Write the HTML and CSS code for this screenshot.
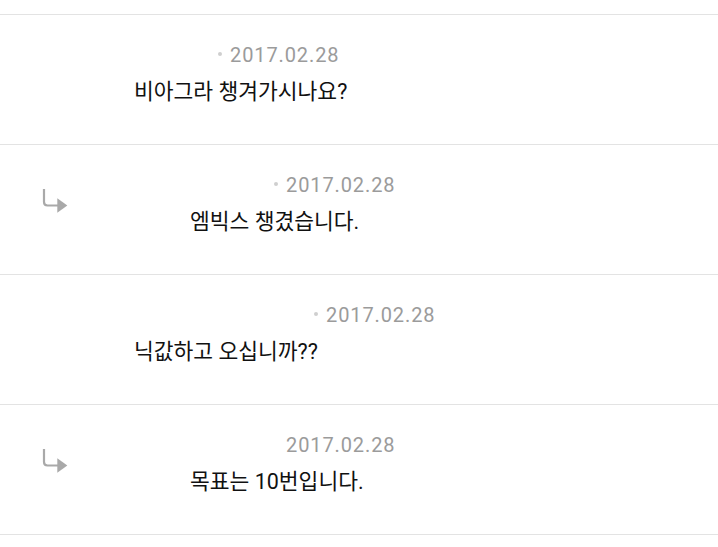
FILE: index.html
```html
<!DOCTYPE html>
<html lang="ko">
<head>
<meta charset="utf-8">
<title>댓글</title>
<link rel="stylesheet" href="styles.css">
</head>
<body>
<div class="list">
  <div class="list-top"></div>

  <div class="row">
    <div class="content content-main">
      <div class="meta">
        <span class="name name-short"></span>
        <span class="dot"></span>
        <span class="date">2017.02.28</span>
      </div>
      <div class="msg">비아그라 챙겨가시나요?</div>
    </div>
  </div>

  <div class="row row-reply">
    <svg class="reply-icon" width="26" height="26" viewBox="0 0 26 26" aria-hidden="true">
      <path d="M2 1 V14 Q2 17.5 5.5 17.5 H16" fill="none" stroke="#a9a9a9" stroke-width="2.2"/>
      <path d="M15.3 10.3 L25.3 17.5 L15.3 24.7 Z" fill="#a9a9a9"/>
    </svg>
    <div class="avatar-gap"></div>
    <div class="content">
      <div class="meta">
        <span class="name name-short"></span>
        <span class="dot"></span>
        <span class="date">2017.02.28</span>
      </div>
      <div class="msg">엠빅스 챙겼습니다.</div>
    </div>
  </div>

  <div class="row">
    <div class="content content-main">
      <div class="meta">
        <span class="name name-long"></span>
        <span class="dot"></span>
        <span class="date">2017.02.28</span>
      </div>
      <div class="msg">닉값하고 오십니까??</div>
    </div>
  </div>

  <div class="row row-reply">
    <svg class="reply-icon" width="26" height="26" viewBox="0 0 26 26" aria-hidden="true">
      <path d="M2 1 V14 Q2 17.5 5.5 17.5 H16" fill="none" stroke="#a9a9a9" stroke-width="2.2"/>
      <path d="M15.3 10.3 L25.3 17.5 L15.3 24.7 Z" fill="#a9a9a9"/>
    </svg>
    <div class="avatar-gap"></div>
    <div class="content">
      <div class="meta">
        <span class="name name-short"></span>
        <span class="dot dot-hidden"></span>
        <span class="date">2017.02.28</span>
      </div>
      <div class="msg">목표는 10번입니다.</div>
    </div>
  </div>
</div>
</body>
</html>
```

FILE: styles.css
```css
* {
  box-sizing: border-box;
}

html, body {
  margin: 0;
  padding: 0;
  background: #ffffff;
}

body {
  width: 718px;
  height: 547px;
  overflow: hidden;
  font-family: Roboto, "Noto Sans CJK KR", sans-serif;
}

.list-top {
  height: 15px;
  border-bottom: 1px solid #e3e3e3;
}

.row {
  display: flex;
  align-items: flex-start;
  height: 130px;
  border-bottom: 1px solid #e3e3e3;
}

.row-reply {
  padding-left: 42px;
}

.reply-icon {
  display: block;
  flex: none;
  margin-top: 43px;
}

.avatar-gap {
  flex: none;
  width: 122px;
}

.content {
  padding-top: 28px;
}

.content-main {
  margin-left: 134px;
}

.meta {
  display: flex;
  align-items: center;
  height: 24px;
  line-height: 24px;
}

.name {
  display: block;
  flex: none;
}

.name-short {
  width: 84px;
}

.name-long {
  width: 180px;
}

.dot {
  display: block;
  flex: none;
  width: 4px;
  height: 4px;
  border-radius: 50%;
  background: #cfcfcf;
  margin-right: 8px;
  margin-top: -2px;
}

.dot-hidden {
  visibility: hidden;
}

.date {
  font-size: 20px;
  letter-spacing: 0.9px;
  color: #9b9b9b;
}

.msg {
  margin-top: 11px;
  font-size: 21.5px;
  line-height: 28px;
  color: #111111;
}
```
